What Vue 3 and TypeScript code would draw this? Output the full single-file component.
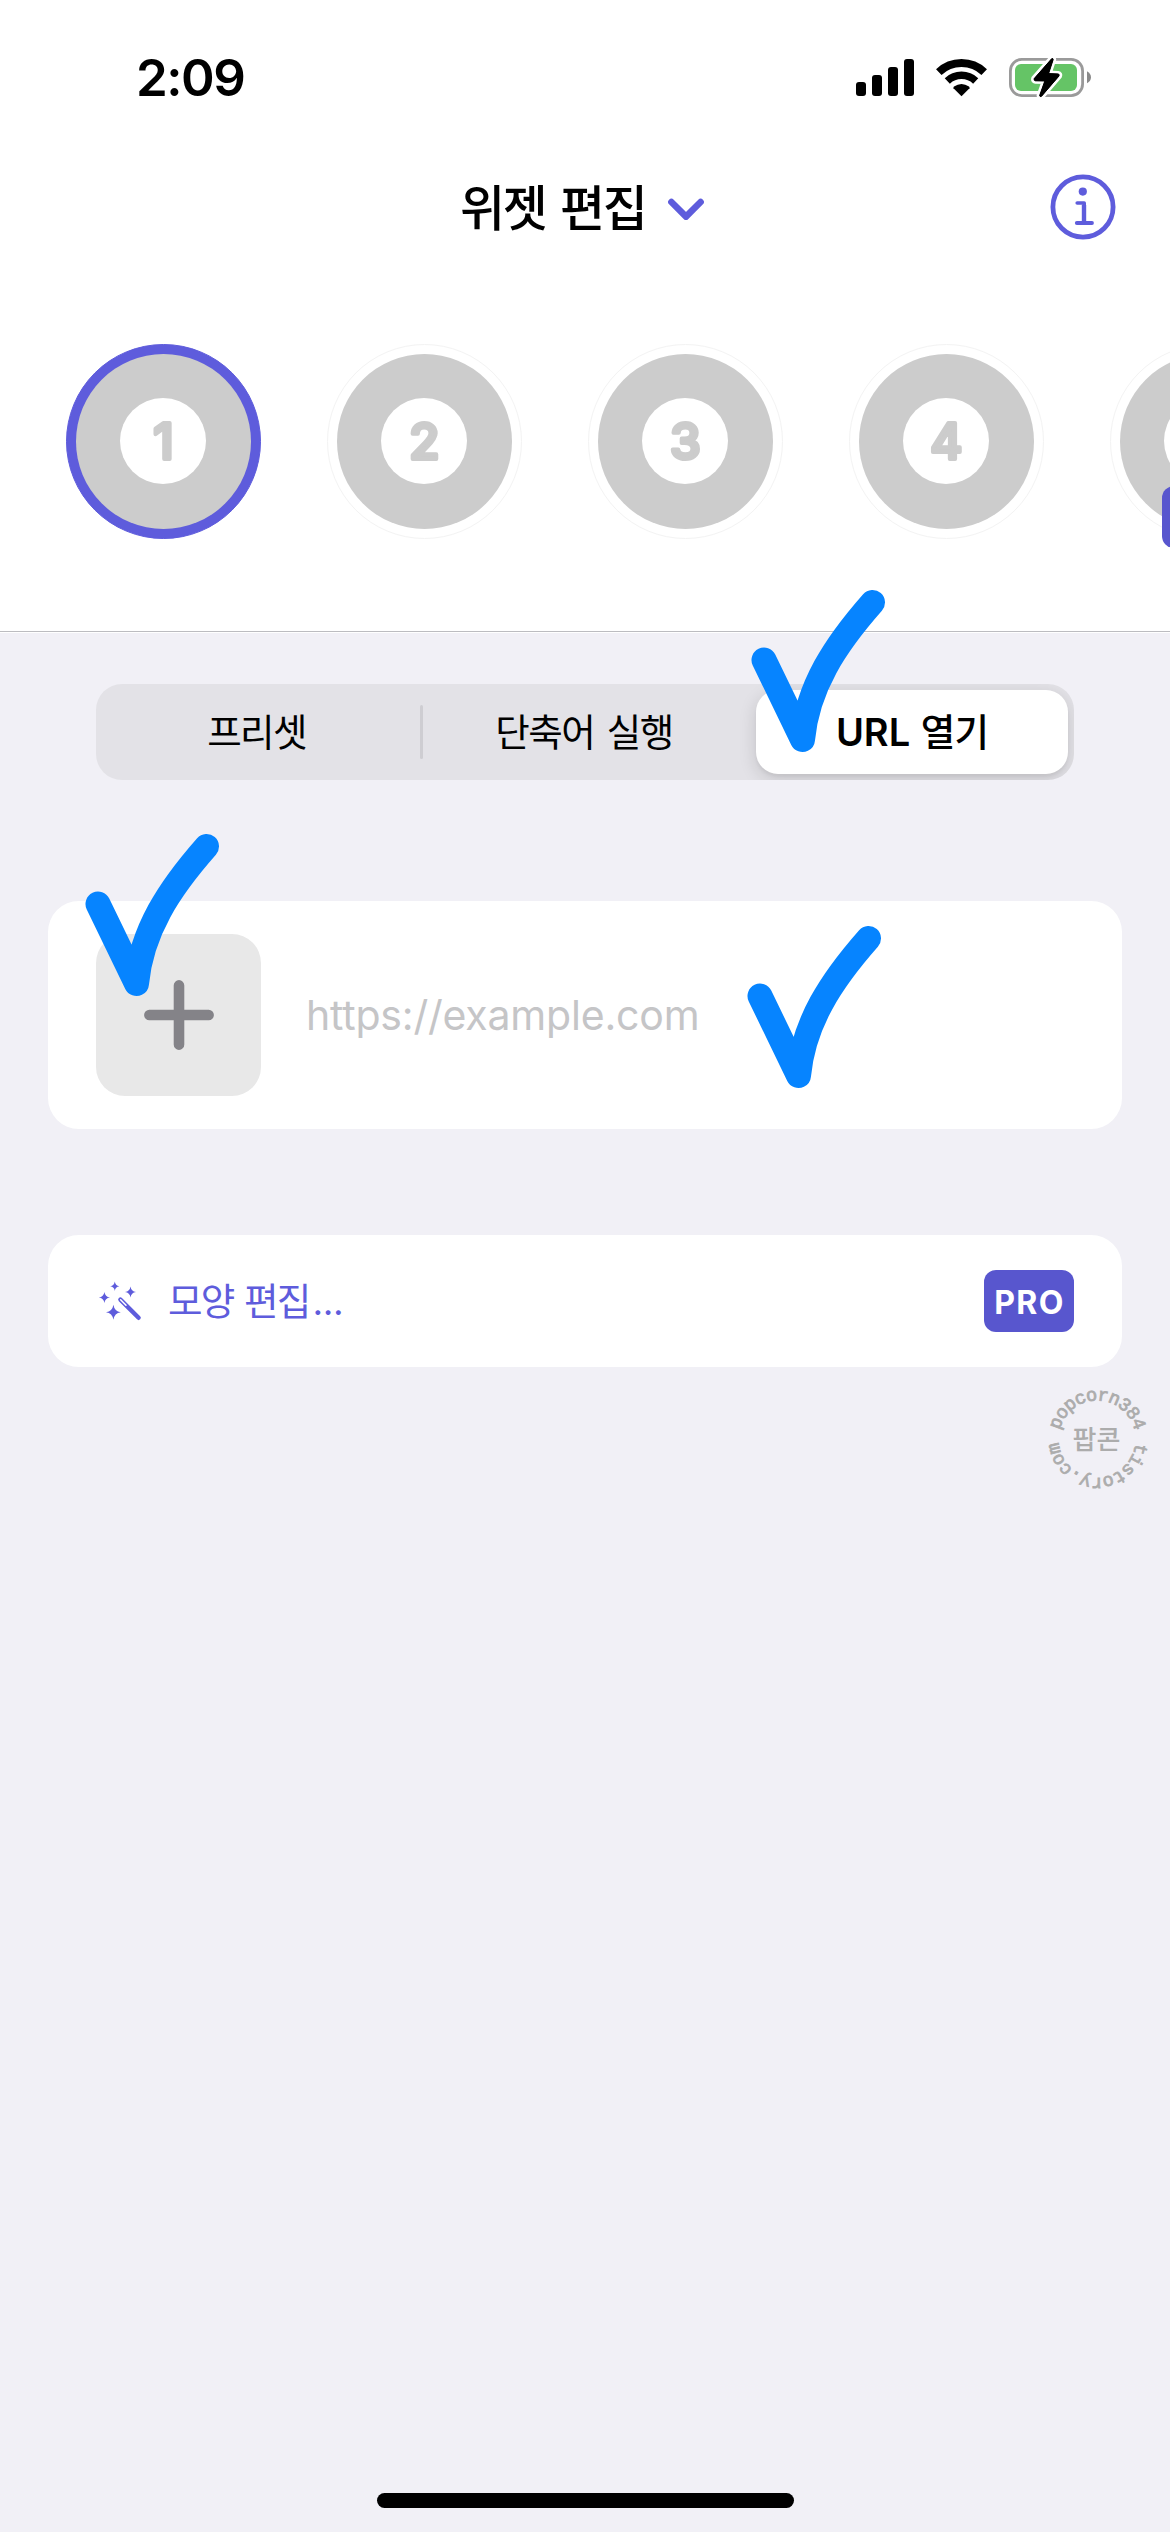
<script setup lang="ts">
interface Slot {
  label: string
  selected: boolean
  pro: boolean
}

const slots: Slot[] = [1, 2, 3, 4, 5].map((n) => ({
  label: String(n),
  selected: n === 1,
  pro: n === 5,
}))

const checkPath = 'M14 71 L52.5 150.5 C57.5 97.5 85.5 55.5 122.5 13.5'
</script>

<template>
  <div class="screen">
    <header class="top">
      <div class="status">
        <span class="clock">2:09</span>
        <svg class="status-icons" width="238" height="44" viewBox="854 56 238 44">
          <g fill="#000">
            <rect x="856" y="82" width="10" height="14" rx="3" />
            <rect x="872" y="75" width="10" height="21" rx="3" />
            <rect x="888" y="67" width="10" height="29" rx="3" />
            <rect x="904" y="59" width="10" height="37" rx="3" />
          </g>
          <g fill="none" stroke="#000">
            <path d="M938.8 72.1A33 33 0 0 1 984.2 72.1" stroke-width="8" />
            <path d="M947.3 81A20.7 20.7 0 0 1 975.7 81" stroke-width="7.5" />
          </g>
          <path d="M961.5 96.3L953.5 88.3Q953.2 87.3 954 86.6Q961.5 81.4 969 86.6Q969.8 87.3 969.5 88.3Z" />
          <rect x="1010.4" y="59.4" width="72.2" height="36.2" rx="11.5" fill="none" stroke="#9a9a9a" stroke-width="2.8" />
          <rect x="1015" y="64" width="62" height="27" rx="6" fill="#65c466" />
          <path d="M1087 71.2Q1091 73.5 1091 77.2Q1091 81 1087 83.2Z" fill="#8a8a8a" />
          <path
            d="M1051.6 58.8L1034.2 78.6Q1033.6 80.6 1035.4 80.8L1044.8 81L1039.6 95.6Q1040 97.4 1041.6 96.2L1059 76Q1059.8 74.2 1058 73.9L1048.6 73.6L1053.2 59.6Q1053 57.8 1051.6 58.8Z"
            fill="#000" stroke="#fff" stroke-width="6" stroke-linejoin="round" paint-order="stroke"
          />
          <path
            d="M1051.6 58.8L1034.2 78.6Q1033.6 80.6 1035.4 80.8L1044.8 81L1039.6 95.6Q1040 97.4 1041.6 96.2L1059 76Q1059.8 74.2 1058 73.9L1048.6 73.6L1053.2 59.6Q1053 57.8 1051.6 58.8Z"
            fill="#000" stroke="#000" stroke-width="1" stroke-linejoin="round"
          />
        </svg>
      </div>

      <div class="nav">
        <h1 class="title">위젯 편집</h1>
        <svg class="chevron" width="38" height="26" viewBox="0 0 38 26">
          <path d="M4.4 6L19 20.6L33.6 6" fill="none" stroke="#5e5cdc" stroke-width="6.6" stroke-linecap="round" stroke-linejoin="round" />
        </svg>
        <svg class="info" width="66" height="66" viewBox="0 0 66 66">
          <g fill="none" stroke="#5e5cdc" stroke-linecap="round" stroke-linejoin="round">
            <circle cx="33" cy="33" r="30.1" stroke-width="4.8" />
            <path d="M27.2 29H34.2V49" stroke-width="3.6" />
            <path d="M34 31V48" stroke-width="4.4" stroke-linecap="butt" />
            <path d="M26.8 49H42" stroke-width="3.8" />
          </g>
          <circle cx="32.8" cy="17.6" r="4.1" fill="#5e5cdc" />
        </svg>
      </div>

      <div class="slots">
        <div v-for="slot in slots" :key="slot.label" class="slot" :class="{ selected: slot.selected }">
          <svg width="175" height="175" viewBox="0 0 175 175">
            <circle cx="87.5" cy="87.5" r="87.5" fill="#cccccc" />
            <circle cx="87" cy="87" r="43" fill="#fff" />
            <text class="digit" x="87.3" y="105" text-anchor="middle">{{ slot.label }}</text>
          </svg>
          <span v-if="slot.pro" class="pro slot-pro">PRO</span>
        </div>
      </div>
    </header>

    <main class="body">
      <div class="segments">
        <div class="seg first">프리셋</div>
        <i class="bar"></i>
        <div class="seg second">단축어 실행</div>
        <div class="seg active">URL <span>열기</span></div>
        <svg class="check check-seg" width="136" height="164" viewBox="0 0 136 164"><path :d="checkPath" /></svg>
      </div>

      <section class="card url-card">
        <div class="tile">
          <svg width="72" height="72" viewBox="0 0 72 72">
            <path d="M36 6.4V65.6M6.4 36H65.6" stroke="#848388" stroke-width="10.6" stroke-linecap="round" />
          </svg>
        </div>
        <span class="placeholder">https://example.com</span>
        <svg class="check check-tile" width="136" height="164" viewBox="0 0 136 164"><path :d="checkPath" /></svg>
        <svg class="check check-url" width="136" height="164" viewBox="0 0 136 164"><path :d="checkPath" /></svg>
      </section>

      <section class="card style-card">
        <svg class="wand" width="44" height="42" viewBox="98 1281 44 42">
          <g fill="#5e5cdc">
            <path d="M114.8 1282.5Q115.3 1286.7 119.4 1287.2Q115.3 1287.7 114.8 1291.9Q114.3 1287.7 110.2 1287.2Q114.3 1286.7 114.8 1282.5Z" />
            <path d="M130.5 1287.5Q131.2 1292.3 136 1293Q131.2 1293.7 130.5 1298.5Q129.8 1293.7 125 1293Q129.8 1292.3 130.5 1287.5Z" />
            <path d="M104.4 1293Q105.1 1297.8 110 1298.5Q105.1 1299.2 104.4 1304Q103.7 1299.2 98.8 1298.5Q103.7 1297.8 104.4 1293Z" />
            <path d="M113.4 1305.8Q114.4 1312.4 120.8 1313.3Q114.4 1314.2 113.4 1320.8Q112.4 1314.2 106 1313.3Q112.4 1312.4 113.4 1305.8Z" />
          </g>
          <path d="M120.4 1300.6L138.6 1318.8" stroke="#5e5cdc" stroke-width="4.4" stroke-linecap="round" />
          <path d="M120.6 1300.8L126 1306.2" stroke="#fff" stroke-width="1.5" stroke-linecap="round" />
        </svg>
        <span class="style-label">모양 편집<span class="dots">...</span></span>
        <span class="pro">PRO</span>
      </section>

      <svg class="stamp" width="110" height="110" viewBox="-55 -55 110 110">
        <defs>
          <path id="ring" d="M0 38.5A38.5 38.5 0 0 1 0 -38.5A38.5 38.5 0 0 1 0 38.5" />
          <path id="ring-lower" d="M0 -38.5A38.5 38.5 0 0 1 0 38.5A38.5 38.5 0 0 1 0 -38.5" />
        </defs>
        <text class="stamp-ring" text-anchor="middle"><textPath href="#ring" startOffset="50%">popcorn384</textPath></text>
        <text class="stamp-ring" text-anchor="middle"><textPath href="#ring-lower" startOffset="50%">tistory.com</textPath></text>
        <text class="stamp-name" x="-0.5" y="10" text-anchor="middle">팝콘</text>
      </svg>
    </main>

    <footer class="home"><i></i></footer>
  </div>
</template>

<style>
body {
  margin: 0;
  background: #f1f0f6;
}
</style>

<style scoped>
.screen {
  display: flex;
  flex-direction: column;
  width: 1170px;
  height: 2532px;
  overflow: hidden;
  background: #f1f0f6;
  color: #000;
  font-family: Inter, "Noto Sans CJK KR", sans-serif;
}
.top {
  box-sizing: border-box;
  height: 633px;
  background: linear-gradient(#bcbcc0, #bcbcc0) 0 631px / 100% 1px no-repeat #fff;
  overflow: hidden;
}
.status {
  display: flex;
  justify-content: space-between;
  height: 156px;
  padding: 0 78px 0 136px;
}
.clock {
  margin-top: 47px;
  font-size: 51px;
  line-height: 62px;
  font-weight: 600;
  letter-spacing: -1.5px;
}
.status-icons {
  margin-top: 56px;
}
.nav {
  display: flex;
  align-items: center;
  height: 101px;
  padding: 0 54px 0 460px;
}
.title {
  margin: -4px 0 0;
  width: 207px;
  font-family: "Noto Sans CJK KR", sans-serif;
  font-size: 49px;
  line-height: 72px;
  font-weight: 500;
  letter-spacing: -2.4px;
  word-spacing: 6px;
  white-space: nowrap;
}
.chevron {
  margin-top: 4px;
}
.info {
  margin-left: auto;
}
.slots {
  display: flex;
  gap: 66px;
  padding: 87px 0 0 66px;
}
.slot {
  position: relative;
  box-sizing: border-box;
  flex: none;
  width: 195px;
  height: 195px;
  padding: 9px;
  border: 1px solid #f3f3f3;
  border-radius: 50%;
}
.slot svg {
  display: block;
}
.slot.selected {
  background: #5e5cdc;
  border-color: #5e5cdc;
}
.digit {
  font-size: 49px;
  font-weight: 500;
  fill: #cccccc;
  stroke: #cccccc;
  stroke-width: 4px;
  stroke-linejoin: round;
}
.pro {
  flex: none;
  width: 90px;
  height: 62px;
  border-radius: 12px;
  background: #5856ce;
  color: #fff;
  font-size: 32px;
  line-height: 66px;
  font-weight: 700;
  letter-spacing: 1.4px;
  text-indent: 1px;
  text-align: center;
}
.slot-pro {
  position: absolute;
  left: 51px;
  top: 141px;
}
.body {
  display: flex;
  flex-direction: column;
  flex: 1;
  padding: 51px 48px 0;
}
.segments {
  position: relative;
  display: flex;
  align-items: center;
  box-sizing: border-box;
  height: 96px;
  margin: 0 48px;
  padding: 6px;
  border-radius: 26px;
  background: #e3e2e7;
}
.seg {
  height: 84px;
  font-family: "Noto Sans CJK KR", sans-serif;
  font-size: 37.5px;
  line-height: 79px;
  letter-spacing: -1.6px;
  text-align: center;
  white-space: nowrap;
}
.first {
  width: 318px;
  text-indent: -9px;
}
.bar {
  width: 3px;
  height: 54px;
  border-radius: 2px;
  background: #cecdd2;
}
.second {
  width: 333px;
  text-indent: -11px;
  word-spacing: 6px;
}
.active {
  width: 312px;
  border-radius: 22px;
  background: #fff;
  box-shadow: 0 5px 18px rgba(0, 0, 0, 0.14), 0 3px 3px rgba(0, 0, 0, 0.04);
  clip-path: inset(-6px -6px -6px -60px round 26px);
  font-family: Inter, "Noto Sans CJK KR", sans-serif;
  font-size: 38px;
  line-height: 84px;
  font-weight: 600;
  letter-spacing: 0;
  word-spacing: 1px;
}
.active span {
  font-family: "Noto Sans CJK KR", sans-serif;
  font-size: 37.5px;
  line-height: 1;
  font-weight: 500;
  letter-spacing: -0.8px;
}
.check {
  position: absolute;
  fill: none;
  stroke: #0684ff;
  stroke-width: 25px;
  stroke-linecap: round;
  stroke-linejoin: round;
}
.check-seg {
  left: 654px;
  top: -95px;
}
.check-tile {
  left: 36px;
  top: -68px;
}
.check-url {
  left: 698px;
  top: 24px;
}
.card {
  display: flex;
  align-items: center;
  box-sizing: border-box;
  padding: 0 48px;
  border-radius: 31px;
  background: #fff;
}
.url-card {
  position: relative;
  height: 228px;
  margin-top: 121px;
}
.tile {
  display: flex;
  align-items: center;
  justify-content: center;
  width: 165px;
  height: 162px;
  border-radius: 29px;
  background: #e8e8e8;
}
.placeholder {
  margin-left: 45px;
  color: #c5c5c7;
  font-size: 41px;
  line-height: 50px;
  letter-spacing: -0.2px;
}
.style-card {
  height: 132px;
  margin-top: 106px;
}
.wand {
  margin-left: 2px;
}
.style-label {
  margin: -4px auto 0 26px;
  color: #5e5cdc;
  font-family: "Noto Sans CJK KR", sans-serif;
  font-size: 37.5px;
  line-height: 56px;
  letter-spacing: -1.8px;
  word-spacing: 4px;
}
.dots {
  margin-left: 3px;
  font-family: Inter, sans-serif;
  font-size: 37px;
  line-height: 1;
  letter-spacing: -0.4px;
}
.stamp {
  align-self: flex-end;
  margin: 17px -30px 0 0;
}
.stamp-ring {
  font-family: "Liberation Mono", monospace;
  font-size: 18.5px;
  letter-spacing: -0.8px;
  fill: #acacac;
  stroke: #acacac;
  stroke-width: 0.8px;
}
.stamp-name {
  font-family: "Noto Sans CJK KR", sans-serif;
  font-size: 26px;
  font-weight: 500;
  fill: #acacac;
}
.home {
  display: flex;
  justify-content: center;
  height: 39px;
}
.home i {
  width: 417px;
  height: 15px;
  border-radius: 8px;
  background: #000;
}
</style>
